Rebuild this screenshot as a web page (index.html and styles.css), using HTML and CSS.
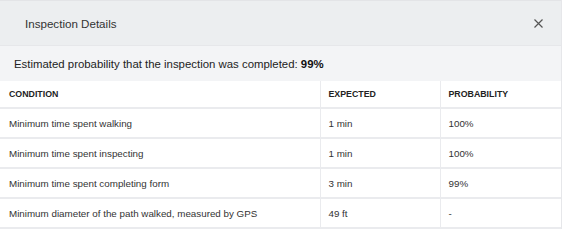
FILE: index.html
```html
<!DOCTYPE html>
<html>
<head>
<meta charset="utf-8">
<link rel="stylesheet" href="styles.css">
</head>
<body>
<div class="modal">
  <div class="modal-header">
    <span class="title">Inspection Details</span>
    <span class="close" aria-label="Close">
      <svg width="9" height="9" viewBox="0 0 9 9"><path d="M0.5 0.5L8.5 8.5M8.5 0.5L0.5 8.5" stroke="#555" stroke-width="1.2" fill="none"/></svg>
    </span>
  </div>
  <div class="banner"><span>Estimated probability that the inspection was completed: <b>99%</b></span></div>
  <table class="details">
    <thead>
      <tr><th class="c1">CONDITION</th><th class="c2">EXPECTED</th><th class="c3">PROBABILITY</th></tr>
    </thead>
    <tbody>
      <tr><td>Minimum time spent walking</td><td>1 min</td><td>100%</td></tr>
      <tr><td>Minimum time spent inspecting</td><td>1 min</td><td>100%</td></tr>
      <tr><td>Minimum time spent completing form</td><td>3 min</td><td>99%</td></tr>
      <tr><td>Minimum diameter of the path walked, measured by GPS</td><td>49 ft</td><td>-</td></tr>
    </tbody>
  </table>
</div>
</body>
</html>
```
FILE: styles.css
```css
html, body { margin: 0; padding: 0; background: #fff; }
body { font-family: "Liberation Sans", Arial, sans-serif; color: #333; }
.modal { width: 562px; border-right: 1px solid #e6e7ea; box-sizing: border-box; }
.modal-header {
  height: 45px;
  background: #eceef0;
  border-top: 1px solid #e3e4e7;
  box-sizing: border-box;
  display: flex;
  align-items: center;
  justify-content: space-between;
  padding: 1px 18px 0 25px;
}
.title { font-size: 11.6px; color: #333; }
.close { display: flex; width: 9px; height: 9px; }
.banner {
  background: #f3f4f6;
  border-top: 1px solid #e6e7ea;
  height: 36px;
  box-sizing: border-box;
  display: flex;
  align-items: center;
  padding-left: 14px;
  font-size: 11.4px;
  color: #222;
}
.banner b { font-weight: bold; color: #111; }
.details { width: 561px; border-collapse: collapse; table-layout: fixed; }
.details th, .details td {
  text-align: left;
  padding: 0 0 0 9px;
  border-bottom: 2px solid #eaebee;
  height: 30px;
  box-sizing: border-box;
}
.details th {
  font-size: 8.8px;
  font-weight: bold;
  color: #222;
  height: 27px;
}
.details td { font-size: 9.8px; color: #333; }
.details th + th, .details td + td { border-left: 1px solid #eaebee; padding-left: 8px; }
.c1 { width: 320px; }
.c2 { width: 120px; }
```
